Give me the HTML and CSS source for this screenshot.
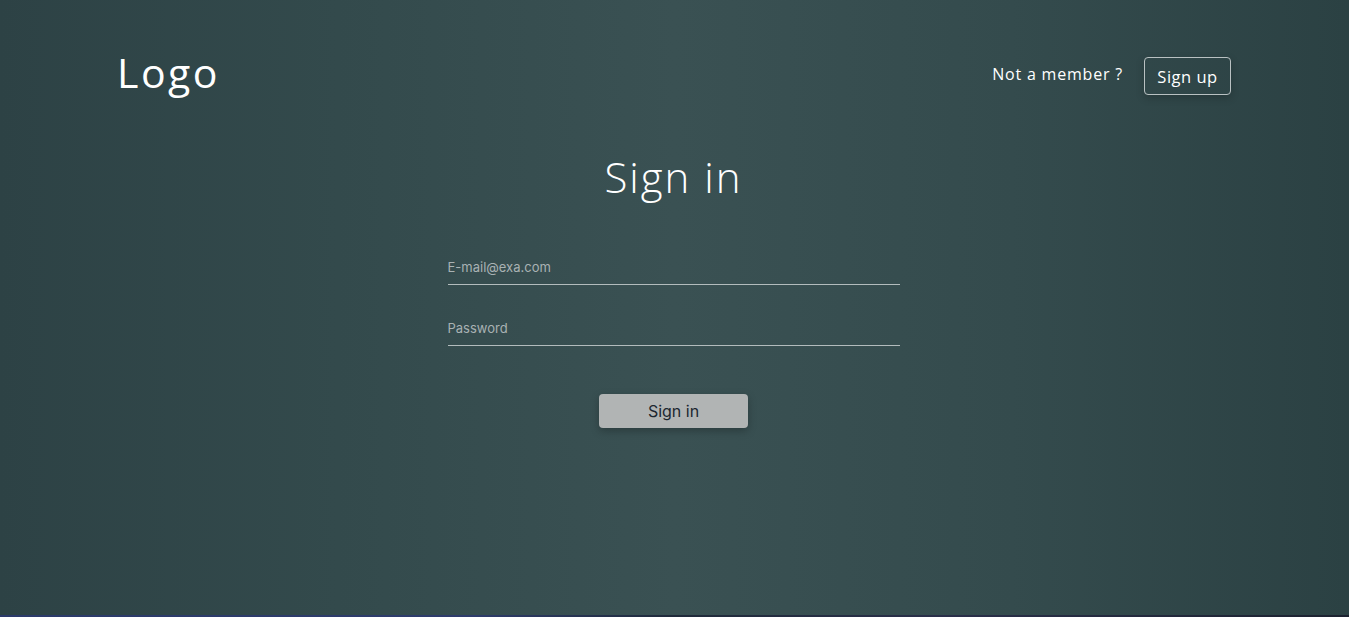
FILE: index.html
```html
<!DOCTYPE html>
<html lang="en">
<head>
<meta charset="utf-8">
<title>Sign in</title>
<link rel="stylesheet" href="styles.css">
</head>
<body>
<div class="page">
  <header class="header">
    <div class="logo">Logo</div>
    <div class="member">
      <span class="member-text">Not a member ?</span>
      <button class="signup-btn" type="button">Sign up</button>
    </div>
  </header>
  <main class="main">
    <h1 class="title">Sign in</h1>
    <form class="form">
      <input class="field" type="email" placeholder="E-mail@exa.com">
      <input class="field" type="password" placeholder="Password">
      <button class="signin-btn" type="button">Sign in</button>
    </form>
  </main>
</div>
<div class="strip"></div>
</body>
</html>
```
FILE: styles.css
```css
* { box-sizing: border-box; }
html, body { margin: 0; height: 100%; }
body {
  display: flex;
  flex-direction: column;
  font-family: "Open Sans", "Liberation Sans", sans-serif;
  background: #2e4446;
}
.page {
  flex: 1;
  background: linear-gradient(90deg, #2d4245 0%, #334a4c 25%, #3a5153 50%, #344b4d 75%, #2b4143 100%);
  color: #ffffff;
}
.strip {
  height: 2px;
  background: linear-gradient(90deg, #2b3a6a 0%, #2e3c6c 35%, #1f2a3a 50%, #2a2f4a 70%, #1c2230 100%);
}
.header {
  display: flex;
  justify-content: space-between;
  align-items: flex-start;
  padding: 0 118px 0 117px;
}
.logo {
  margin-top: 48px;
  font-size: 41px;
  font-weight: 400;
  letter-spacing: 2.5px;
  line-height: 48px;
}
.member {
  margin-top: 57px;
  display: flex;
  align-items: center;
  gap: 21px;
}
.member-text {
  font-size: 16px;
  letter-spacing: 0.8px;
  margin-bottom: 4px;
}
.signup-btn {
  font-family: inherit;
  font-size: 16.5px;
  letter-spacing: 0.5px;
  color: #ffffff;
  background: transparent;
  border: 1px solid #b9c1c2;
  border-radius: 4px;
  width: 87px;
  height: 38px;
  padding: 0;
  box-shadow: 0 3px 8px rgba(0,0,0,0.2);
}
.main {
  display: flex;
  flex-direction: column;
  align-items: center;
  padding-right: 2px;
}
.title {
  margin: 53px 0 0;
  font-size: 42px;
  font-weight: 300;
  letter-spacing: 2px;
  line-height: 56px;
}
.form {
  display: flex;
  flex-direction: column;
  align-items: center;
  margin-top: 44px;
}
.field {
  width: 452px;
  height: 36px;
  margin-bottom: 25px;
  background: transparent;
  border: none;
  border-bottom: 1px solid #b3bcbd;
  color: #ffffff;
  font-family: "Inter", "Liberation Sans", sans-serif;
  font-size: 13px;
  padding: 0;
  outline: none;
}
.field::placeholder { color: #a9b2b3; }
.signin-btn {
  margin-top: 23px;
  width: 149px;
  height: 34px;
  background: #b1b4b4;
  border: none;
  border-radius: 4px;
  font-family: "Inter", "Liberation Sans", sans-serif;
  font-size: 16px;
  color: #1c2730;
  box-shadow: 0 3px 8px rgba(0,0,0,0.25);
}
```
